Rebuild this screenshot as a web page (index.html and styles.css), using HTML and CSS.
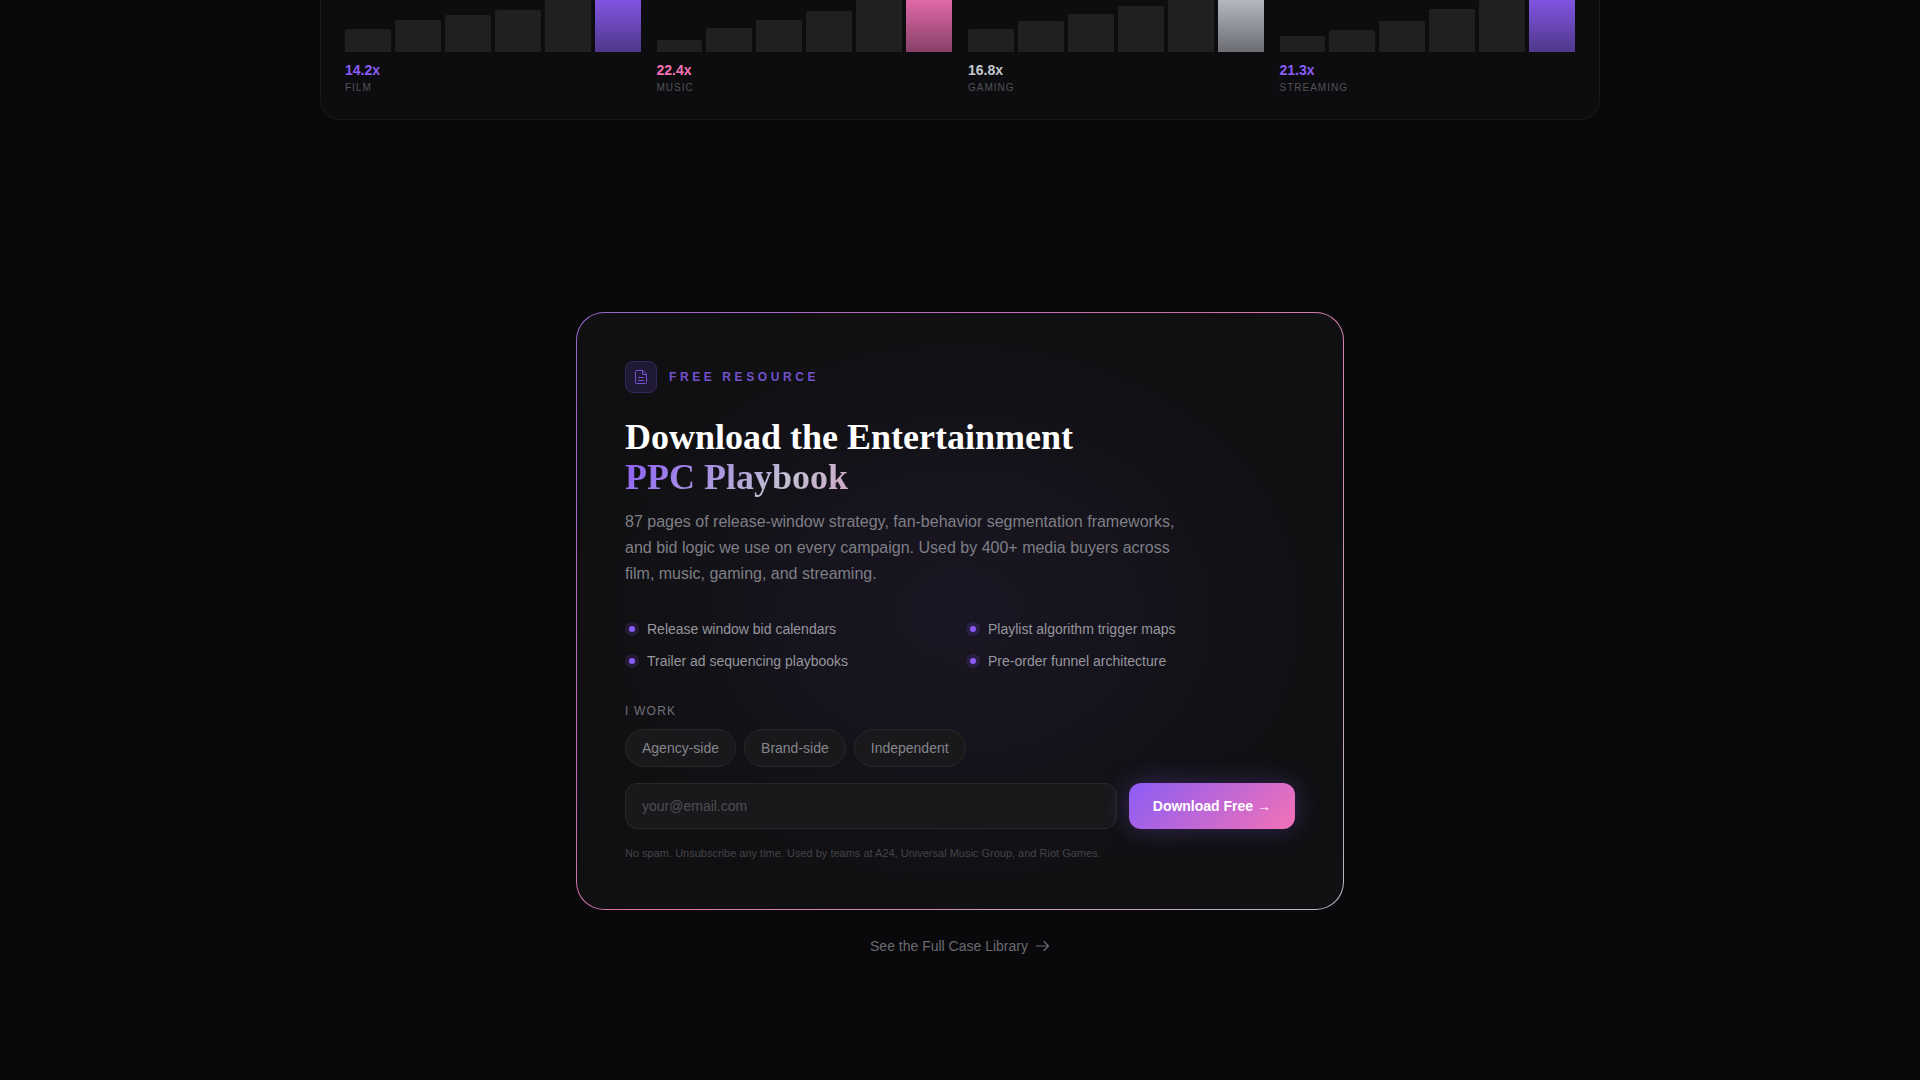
FILE: index.html
```
<!DOCTYPE html>
<html lang="en">
<head>
    <meta charset="UTF-8">
    <meta name="viewport" content="width=device-width, initial-scale=1.0">
    <title>Entertainment PPC Playbook</title>
    <link rel="stylesheet" href="styles.css">
</head>
<body>
    <section class="results">
        <div class="result film">
            <div class="bars">
                <span class="bar" style="height: 23px"></span>
                <span class="bar" style="height: 32px"></span>
                <span class="bar" style="height: 37px"></span>
                <span class="bar" style="height: 42px"></span>
                <span class="bar" style="height: 60px"></span>
                <span class="bar peak"></span>
            </div>
            <div class="multiple">14.2x</div>
            <div class="sector">Film</div>
        </div>
        <div class="result music">
            <div class="bars">
                <span class="bar" style="height: 12px"></span>
                <span class="bar" style="height: 24px"></span>
                <span class="bar" style="height: 32px"></span>
                <span class="bar" style="height: 41px"></span>
                <span class="bar" style="height: 60px"></span>
                <span class="bar peak"></span>
            </div>
            <div class="multiple">22.4x</div>
            <div class="sector">Music</div>
        </div>
        <div class="result gaming">
            <div class="bars">
                <span class="bar" style="height: 23px"></span>
                <span class="bar" style="height: 31px"></span>
                <span class="bar" style="height: 38px"></span>
                <span class="bar" style="height: 46px"></span>
                <span class="bar" style="height: 60px"></span>
                <span class="bar peak"></span>
            </div>
            <div class="multiple">16.8x</div>
            <div class="sector">Gaming</div>
        </div>
        <div class="result streaming">
            <div class="bars">
                <span class="bar" style="height: 16px"></span>
                <span class="bar" style="height: 22px"></span>
                <span class="bar" style="height: 31px"></span>
                <span class="bar" style="height: 43px"></span>
                <span class="bar" style="height: 60px"></span>
                <span class="bar peak"></span>
            </div>
            <div class="multiple">21.3x</div>
            <div class="sector">Streaming</div>
        </div>
    </section>

    <main class="resource">
        <div class="card">
            <div class="card-inner">
                <div class="eyebrow">
                    <span class="eyebrow-icon">
                        <svg width="16" height="16" viewBox="0 0 16 16" fill="none" stroke="currentColor" stroke-linecap="round" stroke-linejoin="round" aria-hidden="true">
                            <path d="M9.500 1.500h-6a1 1 0 0 0-1 1v11a1 1 0 0 0 1 1h9a1 1 0 0 0 1-1v-8z"/>
                            <path d="M9.500 1.500v4h4M5.500 8.500h5M5.500 11.500h5"/>
                        </svg>
                    </span>
                    <span>Free Resource</span>
                </div>

                <h2>Download the Entertainment<br><span class="gradient-text">PPC Playbook</span></h2>
                <p class="description">87 pages of release-window strategy, fan-behavior segmentation frameworks, and bid logic we use on every campaign. Used by 400+ media buyers across film, music, gaming, and streaming.</p>

                <ul class="features">
                    <li>Release window bid calendars</li>
                    <li>Playlist algorithm trigger maps</li>
                    <li>Trailer ad sequencing playbooks</li>
                    <li>Pre-order funnel architecture</li>
                </ul>

                <form>
                    <div class="work-label" id="workLabel">I work</div>
                    <div class="work-options" role="group" aria-labelledby="workLabel">
                        <button type="button" class="pill">Agency-side</button>
                        <button type="button" class="pill">Brand-side</button>
                        <button type="button" class="pill">Independent</button>
                    </div>
                    <div class="email-row">
                        <input type="email" id="email" placeholder="your@email.com" aria-label="Email address">
                        <button type="submit" class="download-btn">Download Free →</button>
                    </div>
                </form>
                <p class="note">No spam. Unsubscribe any time. Used by teams at A24, Universal Music Group, and Riot Games.</p>
            </div>
        </div>

        <a href="#" class="library-link">
            See the Full Case Library
            <svg width="16" height="16" viewBox="0 0 16 16" fill="none" stroke="currentColor" stroke-width="1.2" stroke-linecap="round" stroke-linejoin="round" aria-hidden="true">
                <path d="M2.500 8h12M10 3.500 14.500 8 10 12.500"/>
            </svg>
        </a>
    </main>
</body>
</html>
```
FILE: styles.css
```
:root {
    --bg: #09090b;
    --purple: #8b5cf6;
    --pink: #f472b6;
    --silver: #c4c8cf;
}

* {
    margin: 0;
    padding: 0;
    box-sizing: border-box;
}

body {
    background-color: var(--bg);
    color: white;
    font-family: "Liberation Sans", Arial, sans-serif;
    font-size: 14px;
    line-height: 20px;
}

button,
input {
    font-family: inherit;
    font-size: 14px;
}

/* Results chart */
.results {
    display: grid;
    grid-template-columns: repeat(4, 1fr);
    gap: 16px;
    max-width: 1280px;
    margin: 0 auto;
    padding: 0 24px 24px;
    background-color: #0d0d0f;
    border: 1px solid #19191c;
    border-top: none;
    border-radius: 0 0 20px 20px;
}

.result {
    --accent: var(--purple);
    --accent-low: #4f378a;
}

.result.music {
    --accent: var(--pink);
    --accent-low: #874168;
}

.result.gaming {
    --accent: var(--silver);
    --accent-low: #6b6d73;
}

.bars {
    display: flex;
    align-items: flex-end;
    gap: 4px;
    height: 52px;
    margin-bottom: 8px;
}

.bar {
    flex: 1;
    background-color: #202023;
    border-radius: 2px 2px 0 0;
}

.bar.peak {
    height: 64px;
    background: linear-gradient(to bottom, var(--accent), var(--accent-low));
}

.multiple {
    color: var(--accent);
    font-weight: 700;
}

.sector {
    color: #52525b;
    font-size: 10px;
    line-height: 15px;
    letter-spacing: 1px;
    text-transform: uppercase;
}

/* Playbook card */
.resource {
    max-width: 768px;
    margin: 0 auto;
    padding-top: 192px;
    text-align: center;
}

.card {
    padding: 1px;
    border-radius: 28px;
    background: linear-gradient(135deg, #9664d4, #d874a8, #b8bcc0);
    text-align: left;
}

.card-inner {
    padding: 48px;
    border-radius: 27px;
    background: radial-gradient(ellipse at center, rgba(139, 92, 246, 0.08), transparent 70%) #101012;
}

.eyebrow {
    display: flex;
    align-items: center;
    gap: 12px;
    margin-bottom: 24px;
    color: #7450cc;
    font-size: 12px;
    font-weight: 700;
    letter-spacing: 0.3em;
    text-transform: uppercase;
}

.eyebrow-icon {
    display: flex;
    align-items: center;
    justify-content: center;
    width: 32px;
    height: 32px;
    background-color: #201935;
    border: 1px solid #35285a;
    border-radius: 8px;
}

h2 {
    margin-bottom: 12px;
    font-family: "Liberation Serif", "Times New Roman", serif;
    font-size: 36px;
    font-weight: 700;
    line-height: 40px;
}

.gradient-text {
    background: linear-gradient(135deg, #8b5cf6, #c0c0d0 70%, #f472b6 160%);
    background-clip: text;
    -webkit-background-clip: text;
    color: transparent;
}

.description {
    max-width: 576px;
    margin-bottom: 32px;
    color: #7f7f86;
    font-size: 16px;
    line-height: 26px;
}

.features {
    display: grid;
    grid-template-columns: 1fr 1fr;
    gap: 12px;
    margin-bottom: 30px;
    color: #96969d;
    list-style: none;
}

.features li {
    display: flex;
    align-items: center;
    gap: 12px;
    padding-left: 4px;
}

.features li::before {
    content: "";
    width: 6px;
    height: 6px;
    border-radius: 50%;
    background-color: var(--purple);
    box-shadow: 0 0 0 4px rgba(139, 92, 246, 0.15);
}

.work-label {
    margin-bottom: 8px;
    color: #71717a;
    font-size: 12px;
    letter-spacing: 0.1em;
    text-transform: uppercase;
}

.work-options {
    display: flex;
    flex-wrap: wrap;
    gap: 8px;
    margin-bottom: 16px;
}

.pill {
    padding: 8px 16px;
    background-color: #19191c;
    border: 1px solid #28282b;
    border-radius: 19px;
    color: #85858b;
    line-height: 20px;
    cursor: pointer;
}

.email-row {
    display: flex;
    gap: 12px;
}

.email-row input {
    flex: 1;
    min-width: 0;
    padding: 12px 16px;
    background-color: #19191c;
    border: 1px solid #28282b;
    border-radius: 12px;
    color: white;
    outline: none;
}

.email-row input::placeholder {
    color: #4e4e54;
}

.download-btn {
    padding: 13px 24px;
    background: linear-gradient(135deg, var(--purple), var(--pink));
    border: none;
    border-radius: 12px;
    box-shadow: 0 0 24px rgba(139, 92, 246, 0.3);
    color: white;
    font-weight: 700;
    line-height: 20px;
    cursor: pointer;
}

.note {
    margin-top: 16px;
    color: #444449;
    font-size: 11px;
    line-height: 16px;
}

.library-link {
    display: inline-flex;
    align-items: center;
    gap: 6px;
    margin-top: 26px;
    color: #6a6a72;
    text-decoration: none;
}

@media (max-width: 700px) {
    .results {
        grid-template-columns: 1fr 1fr;
    }

    .card-inner {
        padding: 24px;
    }

    .email-row {
        flex-direction: column;
    }
}
```
